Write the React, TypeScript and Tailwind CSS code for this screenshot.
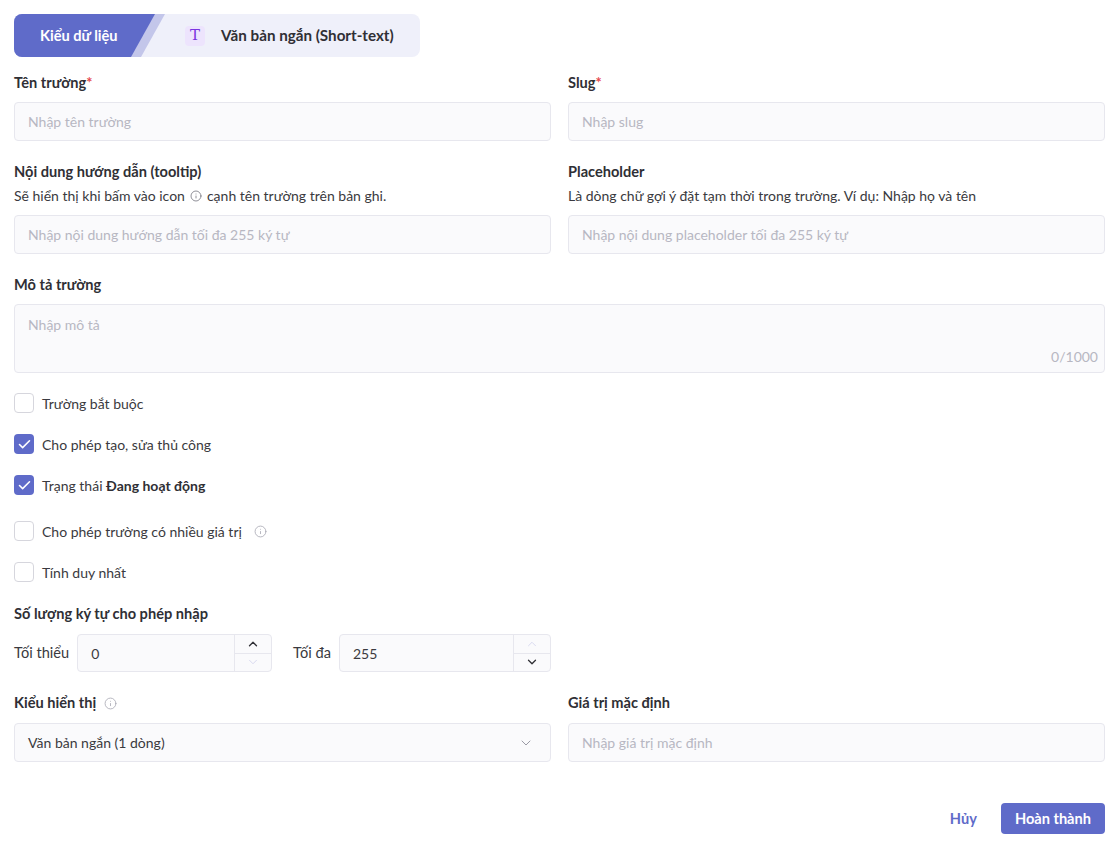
import { Check, ChevronDown, ChevronUp, Info } from 'lucide-react';

const font = "font-['Lato','Noto_Sans',sans-serif]";

function Label({ text, required, info }: { text: string; required?: boolean; info?: boolean }) {
  return (
    <div className="flex h-5 items-center gap-2 text-[14.6px] font-bold leading-5 text-[#2f2f35]">
      <span>
        {text}
        {required && <span className="text-[#e5484d]">*</span>}
      </span>
      {info && <Info size={13} strokeWidth={1.5} className="text-[#a8a8b3]" />}
    </div>
  );
}

function TextInput({ placeholder }: { placeholder: string }) {
  return (
    <div className="flex h-[39px] items-center rounded border border-[#e7e7ee] bg-[#fafafc] px-[13px] text-[14px] text-[#b7b7c2]">
      {placeholder}
    </div>
  );
}

function Box({ checked, label, info }: { checked?: boolean; label: React.ReactNode; info?: boolean }) {
  return (
    <div className="flex h-5 items-center gap-2 text-[14px] text-[#3a3a40]">
      {checked ? (
        <span className="flex h-5 w-5 items-center justify-center rounded bg-[#5f6bc9]">
          <Check size={15} strokeWidth={2.5} className="text-white" />
        </span>
      ) : (
        <span className="h-5 w-5 rounded border border-[#d6d6dd] bg-white" />
      )}
      <span>{label}</span>
      {info && <Info size={13} strokeWidth={1.5} className="ml-1 text-[#a8a8b3]" />}
    </div>
  );
}

function NumberBox({ label, value, upOn, downOn }: { label: string; value: string; upOn: boolean; downOn: boolean }) {
  return (
    <div className="flex w-[258px] items-center gap-2">
      <span className="text-[14.6px] text-[#3a3a40]">{label}</span>
      <div className="flex h-[38px] flex-1 rounded border border-[#e7e7ee] bg-[#fafafc]">
        <div className="flex flex-1 items-center px-[13px] text-[14px] text-[#3a3a40]">{value}</div>
        <div className="flex w-[37px] flex-col border-l border-[#e7e7ee]">
          <div className="flex flex-1 items-center justify-center border-b border-[#e7e7ee]">
            <ChevronUp size={14} strokeWidth={upOn ? 2.2 : 1.5} className={upOn ? 'text-[#2f2f35]' : 'text-[#d3d5ee]'} />
          </div>
          <div className="flex flex-1 items-center justify-center">
            <ChevronDown size={14} strokeWidth={downOn ? 2.2 : 1.5} className={downOn ? 'text-[#2f2f35]' : 'text-[#d3d5ee]'} />
          </div>
        </div>
      </div>
    </div>
  );
}

export default function App() {
  return (
    <div className={`${font} min-h-[846px] w-[1120px] bg-white px-[14px] pt-[14px]`}>
      <div className="w-[1091px]">
        {/* tab header */}
        <div className="flex h-[43px] w-[406px] overflow-hidden rounded-lg bg-[#eff0fa]">
          <div className="h-full w-[151px] bg-[#c3c6ea] [clip-path:polygon(0_0,100%_0,calc(100%-24px)_100%,0_100%)]">
            <div className="flex h-full items-center pl-[26px] text-[14.6px] font-bold text-white bg-[#5f6bc9] [clip-path:polygon(0_0,calc(100%-10px)_0,calc(100%-34px)_100%,0_100%)]">
              Kiểu dữ liệu
            </div>
          </div>
          <div className="flex items-center pl-[20px]">
            <span className="flex h-5 w-5 items-center justify-center rounded bg-[#ede4fd] font-['DejaVu_Serif',serif] text-[15px] leading-none text-[#7a35e0]">
              T
            </span>
            <span className="ml-4 text-[15.2px] font-bold text-[#2f2f35]">Văn bản ngắn (Short-text)</span>
          </div>
        </div>

        {/* row 1 */}
        <div className="mt-4 grid grid-cols-2 gap-x-[17px]">
          <div>
            <Label text="Tên trường" required />
            <div className="mt-[9px]">
              <TextInput placeholder="Nhập tên trường" />
            </div>
          </div>
          <div>
            <Label text="Slug" required />
            <div className="mt-[9px]">
              <TextInput placeholder="Nhập slug" />
            </div>
          </div>
        </div>

        {/* row 2 */}
        <div className="mt-[21px] grid grid-cols-2 gap-x-[17px]">
          <div>
            <Label text="Nội dung hướng dẫn (tooltip)" />
            <div className="mt-[3px] flex h-5 items-center text-[14px] text-[#3a3a40]">
              Sẽ hiển thị khi bấm vào icon
              <Info size={12} strokeWidth={1.5} className="mx-[5px] mt-[2px] text-[#6b6b75]" />
              cạnh tên trường trên bản ghi.
            </div>
            <div className="mt-[10px]">
              <TextInput placeholder="Nhập nội dung hướng dẫn tối đa 255 ký tự" />
            </div>
          </div>
          <div>
            <Label text="Placeholder" />
            <div className="mt-[3px] flex h-5 items-center text-[14px] text-[#3a3a40]">
              Là dòng chữ gợi ý đặt tạm thời trong trường. Ví dụ: Nhập họ và tên
            </div>
            <div className="mt-[10px]">
              <TextInput placeholder="Nhập nội dung placeholder tối đa 255 ký tự" />
            </div>
          </div>
        </div>

        {/* description */}
        <div className="mt-[21px]">
          <Label text="Mô tả trường" />
          <div className="mt-[9px] flex h-[69px] flex-col justify-between rounded border border-[#e7e7ee] bg-[#fafafc] px-[13px] pb-[5px] pt-[9px] text-[14px] text-[#b7b7c2]">
            <span>Nhập mô tả</span>
            <span className="self-end -mr-[7px]">0/1000</span>
          </div>
        </div>

        {/* checkboxes */}
        <div className="mt-[20px] flex flex-col gap-[21px]">
          <Box label="Trường bắt buộc" />
          <Box checked label="Cho phép tạo, sửa thủ công" />
          <Box
            checked
            label={
              <>
                Trạng thái <b className="font-bold text-[#2f2f35]">Đang hoạt động</b>
              </>
            }
          />
          <div className="mt-[5px]">
            <Box label="Cho phép trường có nhiều giá trị" info />
          </div>
          <Box label="Tính duy nhất" />
        </div>

        {/* character limits */}
        <div className="mt-[22px]">
          <Label text="Số lượng ký tự cho phép nhập" />
          <div className="mt-[10px] flex gap-[21px]">
            <NumberBox label="Tối thiểu" value="0" upOn downOn={false} />
            <NumberBox label="Tối đa" value="255" upOn={false} downOn />
          </div>
        </div>

        {/* display type */}
        <div className="mt-[21px] grid grid-cols-2 gap-x-[17px]">
          <div>
            <Label text="Kiểu hiển thị" info />
            <div className="mt-[10px] flex h-[39px] items-center justify-between rounded border border-[#e7e7ee] bg-[#fafafc] pl-[13px] pr-[16px] text-[14px] text-[#3a3a40]">
              <span>Văn bản ngắn (1 dòng)</span>
              <ChevronDown size={16} strokeWidth={1.5} className="text-[#9a9aa5]" />
            </div>
          </div>
          <div>
            <Label text="Giá trị mặc định" />
            <div className="mt-[10px]">
              <TextInput placeholder="Nhập giá trị mặc định" />
            </div>
          </div>
        </div>

        {/* actions */}
        <div className="mt-[41px] flex items-center justify-end gap-6">
          <button className="text-[14.6px] font-bold text-[#5f6bc9]">Hủy</button>
          <button className="h-[31px] rounded bg-[#5f6bc9] px-[14px] text-[14.6px] font-bold text-white">Hoàn thành</button>
        </div>
      </div>
    </div>
  );
}
